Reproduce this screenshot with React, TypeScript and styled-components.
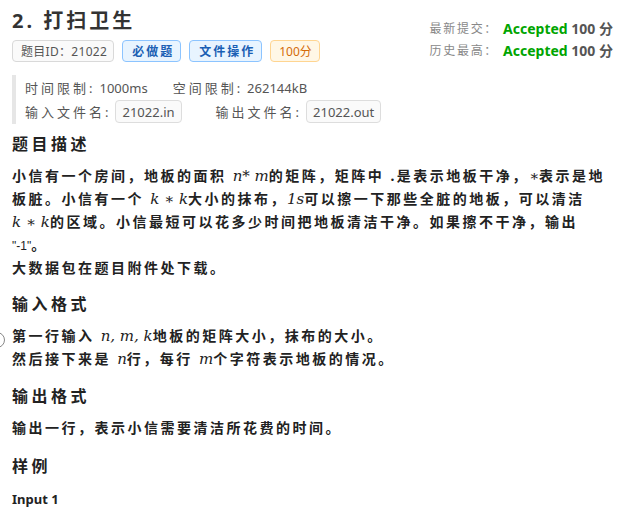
import React from "react";
import styled, { createGlobalStyle } from "styled-components";

const Global = createGlobalStyle`
  html, body { margin: 0; padding: 0; background: #fff; }
  body { font-family: "Noto Sans", "Noto Sans CJK SC", sans-serif; color: #222; }
`;

const Page = styled.div`
  position: relative;
  width: 626px;
  height: 513px;
  overflow: hidden;
  padding: 6px 10px 0 12px;
  box-sizing: border-box;
`;

const Header = styled.div`
  display: flex;
  justify-content: space-between;
  align-items: flex-start;
  padding-right: 3px;
`;

const HeaderLeft = styled.div`
  display: flex;
  flex-direction: column;
`;

const Title = styled.h1`
  margin: 0;
  font-size: 20px;
  line-height: 30px;
  font-weight: 700;
  color: #333;
  letter-spacing: 3px;
`;

const Tags = styled.div`
  display: flex;
  gap: 8px;
  margin-top: 4px;
`;

const tagPad = { gray: "0 6px 0 8px", blue: "0 6px 0 9px", orange: "0 7px 0 8px" };
const tagBorder = { gray: "#d9d9d9", blue: "#8cc4ff", orange: "#ffd591" };
const tagBg = { gray: "#fafafa", blue: "#e8f4ff", orange: "#fff7e6" };
const tagColor = { gray: "#555", blue: "#1a5fb4", orange: "#d46b08" };
const tagLs = { gray: "0.3px", blue: "2px", orange: "0" };

type Kind = "gray" | "blue" | "orange";

const Tag = styled.span<{ $kind: Kind }>`
  display: inline-flex;
  align-items: center;
  height: 22px;
  padding: ${(p) => tagPad[p.$kind]};
  border-radius: 4px;
  font-size: 12px;
  box-sizing: border-box;
  border: 1px solid ${(p) => tagBorder[p.$kind]};
  background: ${(p) => tagBg[p.$kind]};
  color: ${(p) => tagColor[p.$kind]};
  font-weight: ${(p) => (p.$kind === "blue" ? 700 : 400)};
  letter-spacing: ${(p) => tagLs[p.$kind]};
`;

const Status = styled.div`
  display: grid;
  grid-template-columns: auto auto;
  column-gap: 5px;
  margin-top: 12px;
  line-height: 22px;
`;

const StatusLabel = styled.span`
  color: #888;
  font-size: 12px;
  letter-spacing: 1.7px;
`;

const StatusValue = styled.span`
  color: #555;
  font-size: 14px;
  font-weight: 700;
  white-space: nowrap;
`;

const Accepted = styled.span`
  color: #00a500;
`;

const Meta = styled.div`
  margin-top: 13px;
  border-left: 4px solid #e6e6e6;
  padding: 1px 0 1px 9px;
  display: flex;
  flex-direction: column;
  gap: 1px;
  font-size: 13px;
  color: #555;
`;

const MetaRow = styled.div<{ $gap: number }>`
  display: flex;
  align-items: center;
  height: 23px;
  gap: ${(p) => p.$gap}px;
`;

const MetaItem = styled.span`
  display: inline-flex;
  align-items: center;
  gap: 4px;
`;

const MetaLabel = styled.span`
  letter-spacing: 3px;
`;

const Code = styled.span`
  display: inline-flex;
  align-items: center;
  height: 21px;
  padding: 0 6px;
  border: 1px solid #ddd;
  border-radius: 4px;
  background: #fafafa;
  color: #555;
`;

const H2 = styled.h2<{ $mt: number }>`
  margin: ${(p) => p.$mt}px 0 0 0;
  font-size: 16px;
  line-height: 24px;
  font-weight: 700;
  letter-spacing: 3.5px;
  color: #222;
`;

const Para = styled.div`
  margin-top: 8px;
  font-size: 14px;
  line-height: 23px;
  font-weight: 700;
  letter-spacing: 2.5px;
  color: #222;
`;

const M = styled.span`
  font-family: "DejaVu Serif", "Liberation Serif", serif;
  font-style: italic;
  font-weight: 400;
  letter-spacing: 0;
  font-size: 15px;
  line-height: 1;
  white-space: nowrap;
`;

const Str = styled.span`
  font-family: "Liberation Sans", sans-serif;
  font-weight: 400;
  font-size: 12px;
  line-height: 1;
  letter-spacing: 0;
`;

const Small = styled.div`
  margin-top: 12px;
  font-size: 13px;
  line-height: 18px;
  font-weight: 700;
  color: #222;
`;

const EdgeRing = styled.div`
  position: absolute;
  left: -11px;
  top: 332px;
  width: 14px;
  height: 14px;
  border: 1px solid #888;
  border-radius: 50%;
`;

export default function App() {
  return (
    <>
      <Global />
      <Page>
        <Header>
          <HeaderLeft>
            <Title>2. 打扫卫生</Title>
            <Tags>
              <Tag $kind="gray">题目ID：21022</Tag>
              <Tag $kind="blue">必做题</Tag>
              <Tag $kind="blue">文件操作</Tag>
              <Tag $kind="orange">100分</Tag>
            </Tags>
          </HeaderLeft>
          <Status>
            <StatusLabel>最新提交：</StatusLabel>
            <StatusValue>
              <Accepted>Accepted</Accepted> 100 分
            </StatusValue>
            <StatusLabel>历史最高：</StatusLabel>
            <StatusValue>
              <Accepted>Accepted</Accepted> 100 分
            </StatusValue>
          </Status>
        </Header>

        <Meta>
          <MetaRow $gap={25}>
            <MetaItem>
              <MetaLabel>时间限制:</MetaLabel>1000ms
            </MetaItem>
            <MetaItem>
              <MetaLabel>空间限制:</MetaLabel>262144kB
            </MetaItem>
          </MetaRow>
          <MetaRow $gap={34}>
            <MetaItem>
              <MetaLabel>输入文件名:</MetaLabel>
              <Code>21022.in</Code>
            </MetaItem>
            <MetaItem>
              <MetaLabel>输出文件名:</MetaLabel>
              <Code>21022.out</Code>
            </MetaItem>
          </MetaRow>
        </Meta>

        <H2 $mt={8}>题目描述</H2>
        <Para>
          小信有一个房间，地板的面积 <M>n* m</M>的矩阵，矩阵中 .是表示地板干净，<M>∗</M>表示是地板脏。小信有一个{" "}
          <M>k ∗ k</M>大小的抹布，<M>1s</M>可以擦一下那些全脏的地板，可以清洁 <M>k ∗ k</M>的区域。小信最短可以花多少时间把地板清洁干净。如果擦不干净，输出{" "}
          <br />
          <Str>"-1"</Str>。
          <br />
          大数据包在题目附件处下载。
        </Para>

        <H2 $mt={13}>输入格式</H2>
        <Para>
          第一行输入 <M>n, m, k</M>地板的矩阵大小，抹布的大小。
          <br />
          然后接下来是 <M>n</M>行，每行 <M>m</M>个字符表示地板的情况。
        </Para>

        <H2 $mt={14}>输出格式</H2>
        <Para>输出一行，表示小信需要清洁所花费的时间。</Para>

        <H2 $mt={15}>样例</H2>
        <Small>Input 1</Small>
        <EdgeRing />
      </Page>
    </>
  );
}
